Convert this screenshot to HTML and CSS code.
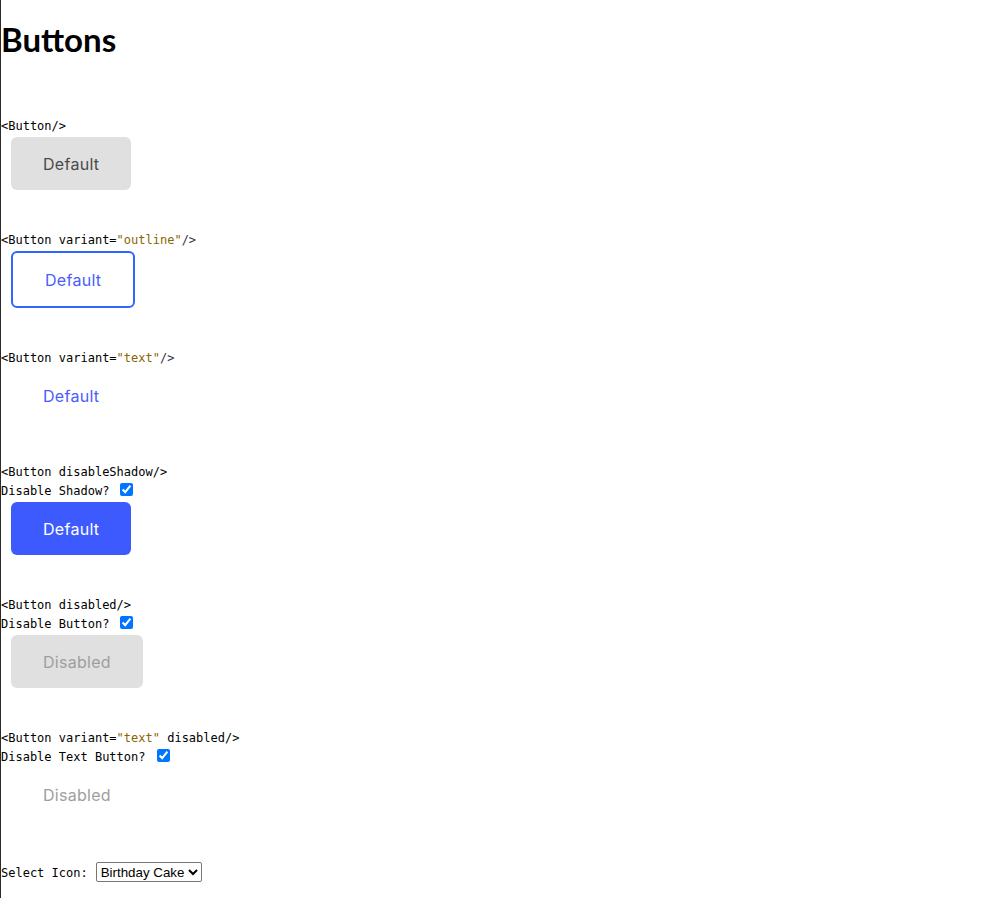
FILE: index.html
```html
<!DOCTYPE html>
<html lang="en">
<head>
<meta charset="utf-8">
<title>Buttons</title>
<link rel="stylesheet" href="styles.css">
</head>
<body>
<h1 class="title">Buttons</h1>

<section class="demo demo-first">
  <div class="code">&lt;Button/&gt;</div>
  <button class="btn btn-default">Default</button>
</section>

<section class="demo">
  <div class="code">&lt;Button variant=<span class="str">"outline"</span><span class="punc">/&gt;</span></div>
  <button class="btn btn-outline">Default</button>
</section>

<section class="demo">
  <div class="code">&lt;Button variant=<span class="str">"text"</span><span class="punc">/&gt;</span></div>
  <button class="btn btn-text">Default</button>
</section>

<section class="demo">
  <div class="code">&lt;Button disableShadow/&gt;</div>
  <label class="row"><span class="row-text">Disable Shadow?</span><input class="check" type="checkbox" checked></label>
  <button class="btn btn-primary">Default</button>
</section>

<section class="demo">
  <div class="code">&lt;Button disabled/&gt;</div>
  <label class="row"><span class="row-text">Disable Button?</span><input class="check" type="checkbox" checked></label>
  <button class="btn btn-disabled" disabled>Disabled</button>
</section>

<section class="demo">
  <div class="code">&lt;Button variant=<span class="str">"text"</span> disabled/&gt;</div>
  <label class="row"><span class="row-text">Disable Text Button?</span><input class="check" type="checkbox" checked></label>
  <button class="btn btn-text-disabled" disabled>Disabled</button>
</section>

<section class="demo select-row">
  <span class="select-label">Select Icon:</span>
  <select class="icon-select">
    <option>Birthday Cake</option>
    <option>Star</option>
    <option>Heart</option>
  </select>
</section>
</body>
</html>
```

FILE: styles.css
```css
html, body {
  margin: 0;
  padding: 0;
}

body {
  background: #ffffff;
  color: #000000;
  border-left: 1px solid #2b2b2b;
  min-height: 100vh;
  box-sizing: border-box;
  font-family: "Liberation Serif", serif;
}

.title {
  margin: 19px 0 0 0;
  height: 40px;
  line-height: 40px;
  font-family: Lato, "Open Sans", sans-serif;
  font-weight: 700;
  font-size: 33px;
}

.demo {
  margin-top: 40px;
}

.demo-first {
  margin-top: 57px;
}

.code,
.row,
.select-label {
  font-family: "DejaVu Sans Mono", "Liberation Mono", monospace;
  font-size: 12px;
  color: #000;
}

.code {
  height: 18px;
  line-height: 20px;
  white-space: pre;
}

.str {
  color: #8a6500;
}

.punc {
  color: #3b2f4a;
}

.row {
  display: flex;
  align-items: center;
  height: 19px;
  white-space: pre;
}

.row-text {
  padding-top: 2px;
}

.check {
  margin: 0 0 0 11px;
  width: 13px;
  height: 13px;
}

.btn {
  display: block;
  margin: 3px 0 0 10px;
  height: 53px;
  padding: 0 32px;
  border: none;
  border-radius: 6px;
  box-sizing: border-box;
  font-family: Inter, "Noto Sans", sans-serif;
  font-size: 16px;
  letter-spacing: 0.28px;
  line-height: 20px;
  cursor: pointer;
}

.btn-default {
  background: #e0e0e0;
  color: #4a4a4a;
}

.btn-outline {
  height: 57px;
  background: #ffffff;
  border: 2px solid #2f66ff;
  color: #4a5cfe;
}

.btn-text {
  background: transparent;
  color: #4a5cfe;
}

.btn-primary {
  background: #3d5afe;
  color: #ffffff;
}

.btn-disabled {
  background: #e0e0e0;
  color: #9e9e9e;
  cursor: default;
}

.btn-text-disabled {
  background: transparent;
  color: #9e9e9e;
  cursor: default;
}

.select-row {
  display: flex;
  align-items: center;
  height: 22px;
}

.select-label {
  white-space: pre;
  padding-top: 2px;
}

.icon-select {
  margin-left: 8px;
  height: 20px;
  font-family: "Liberation Sans", Arial, sans-serif;
  font-size: 13.33px;
  color: #000;
  background: #fff;
  border: 1px solid #767676;
  border-radius: 2px;
}
```
